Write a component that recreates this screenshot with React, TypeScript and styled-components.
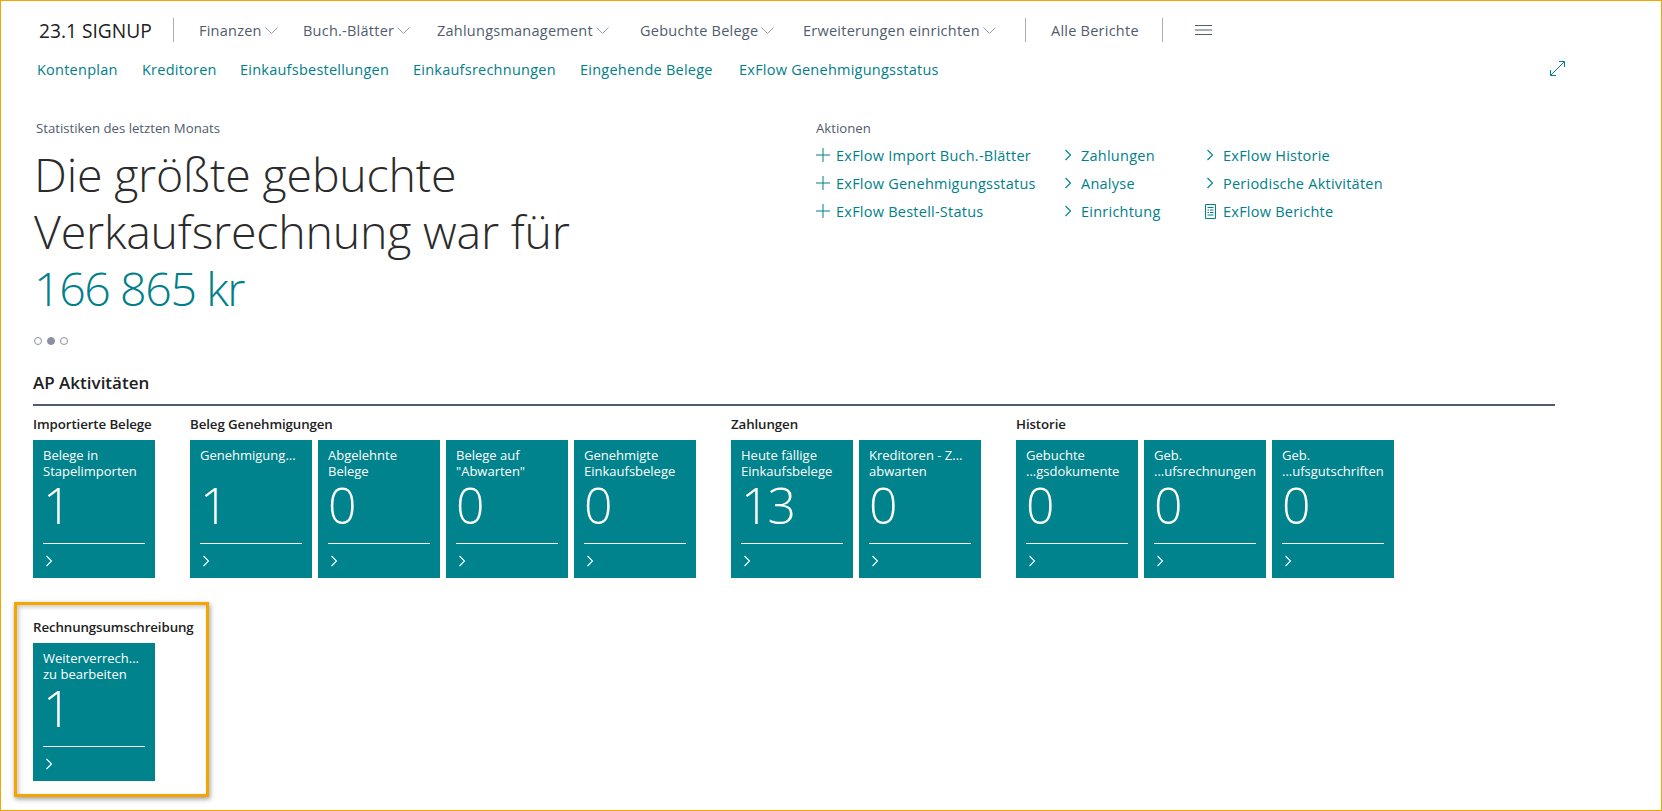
import React from "react";
import styled, { createGlobalStyle } from "styled-components";

const Global = createGlobalStyle`
  html, body { margin: 0; padding: 0; background: #fff; }
  *, *::before, *::after { box-sizing: border-box; }
`;

const FONT = `"Open Sans", "Noto Sans", "Liberation Sans", sans-serif`;
const TEAL = "#00838d";
const LINK = "#00808a";
const SLATE = "#505c6d";

const Frame = styled.div`
  width: 1662px;
  height: 811px;
  overflow: hidden;
  position: relative;
  border: 1px solid #f5a500;
  font-family: ${FONT};
  background: #fff;
`;

const TopNav = styled.nav`
  display: flex;
  align-items: center;
  height: 28px;
  margin-top: 15px;
  padding-left: 38px;
`;

const Brand = styled.div`
  font-size: 19.2px;
  font-weight: 500;
  color: #212121;
  width: 134px;
  white-space: nowrap;
`;

const Sep = styled.span`
  width: 1px;
  height: 24px;
  background: #a9aeb6;
  flex: none;
`;

const MenuItem = styled.div<{ $w: number }>`
  display: flex;
  align-items: center;
  gap: 3px;
  width: ${(p) => p.$w}px;
  flex: none;
  font-size: 14.5px;
  letter-spacing: 0.24px;
  color: ${SLATE};
  white-space: nowrap;
`;

const MenuGroup = styled.div`
  display: flex;
  align-items: center;
  margin-left: 25px;
`;

const Burger = styled.svg`
  margin-left: 32px;
  flex: none;
`;

const LinkRow = styled.div`
  display: flex;
  align-items: center;
  height: 28px;
  margin-top: 11px;
  padding-left: 36px;
  position: relative;
`;

const NavLink = styled.a<{ $w: number }>`
  width: ${(p) => p.$w}px;
  flex: none;
  font-size: 14.5px;
  letter-spacing: 0.24px;
  color: ${LINK};
  white-space: nowrap;
`;

const Expand = styled.svg`
  position: absolute;
  left: 1549px;
  top: 6px;
`;

const Hero = styled.section`
  display: grid;
  grid-template-columns: 782px 1fr;
  padding-left: 33px;
  margin-top: 36px;
  height: 253px;
`;

const Small = styled.div`
  font-size: 13.2px;
  line-height: 18px;
  color: ${SLATE};
`;

const SmallLeft = styled(Small)`
  padding-left: 2px;
`;

const Headline = styled.h1`
  margin: 9px 0 0;
  font-size: 46.5px;
  line-height: 57px;
  font-weight: 300;
  color: #2b2b2b;
  letter-spacing: -0.2px;
  white-space: nowrap;
`;

const Amount = styled.span`
  display: block;
  color: ${LINK};
  letter-spacing: -1.4px;
`;

const Dots = styled.div`
  display: flex;
  gap: 5px;
  margin-top: 20px;
`;

const Dot = styled.span<{ $on?: boolean }>`
  width: 8px;
  height: 8px;
  border-radius: 50%;
  border: 1px solid #8a90a0;
  background: ${(p) => (p.$on ? "#8a90a0" : "#fff")};
`;

const ActionGrid = styled.div`
  display: grid;
  grid-template-columns: 245px 142px 1fr;
  grid-auto-rows: 28px;
  margin-top: 4px;
`;

const Action = styled.a`
  display: flex;
  align-items: center;
  gap: 6px;
  font-size: 14.5px;
  letter-spacing: 0.24px;
  color: ${LINK};
  white-space: nowrap;
`;

const IconBox = styled.span`
  width: 14px;
  height: 16px;
  flex: none;
  display: flex;
  align-items: center;
  justify-content: center;
`;

const Section = styled.section`
  margin-left: 32px;
  width: 1522px;
`;

const SectionTitle = styled.h2`
  margin: 0;
  height: 32px;
  font-size: 17px;
  line-height: 22px;
  font-weight: 600;
  color: #212121;
`;

const Rule = styled.div`
  height: 2px;
  background: ${SLATE};
`;

const Groups = styled.div<{ $top: number }>`
  display: flex;
  gap: 35px;
  margin-top: ${(p) => p.$top}px;
`;

const Group = styled.div<{ $mark?: boolean }>`
  position: relative;
  ${(p) =>
    p.$mark &&
    `
    &::after {
      content: "";
      position: absolute;
      left: -19px;
      top: -16px;
      width: 195px;
      height: 195px;
      border: 3px solid #f5a500;
      box-shadow: 1px 2px 5px rgba(0,0,0,.4), inset 2px 2px 4px rgba(0,0,0,.22);
      pointer-events: none;
    }
  `}
`;

const GroupLabel = styled.div`
  height: 25px;
  font-size: 13.3px;
  line-height: 18px;
  font-weight: 600;
  color: #212121;
  white-space: nowrap;
  letter-spacing: -0.1px;
`;

const Tiles = styled.div`
  display: flex;
  gap: 6px;
`;

const Tile = styled.div`
  width: 122px;
  height: 138px;
  background: ${TEAL};
  color: #fff;
  padding: 7px 10px 0;
  display: flex;
  flex-direction: column;
`;

const TileName = styled.div`
  font-size: 13px;
  line-height: 16px;
  height: 32px;
  white-space: nowrap;
  overflow: hidden;
`;

const TileValue = styled.div`
  font-size: 50px;
  line-height: 52px;
  font-weight: 300;
  height: 63px;
  letter-spacing: -2px;
`;

const TileLine = styled.div`
  height: 1px;
  background: #fff;
  margin-top: 1px;
`;

const TileGo = styled.svg`
  margin: 11px 0 0 2px;
`;

const Chevron = () => (
  <svg width="8" height="12" viewBox="0 0 8 12" fill="none">
    <path d="M1.5 1 L6.5 6 L1.5 11" stroke={LINK} strokeWidth="1.1" />
  </svg>
);

const Plus = () => (
  <svg width="14" height="14" viewBox="0 0 14 14" fill="none">
    <path d="M0 7 H14 M7 0 V14" stroke={LINK} strokeWidth="1" />
  </svg>
);

const Report = () => (
  <svg width="11" height="15" viewBox="0 0 11 15" fill="none">
    <path
      d="M.5.5 H10.5 V14.5 H.5 Z M2.5 3.5 H8.5 M2.5 6 H4 M5 6 H8.5 M2.5 8.5 H4 M5 8.5 H8.5 M2.5 11 H8.5"
      stroke={LINK}
      strokeWidth="1"
    />
  </svg>
);

const Caret = () => (
  <svg width="13" height="7" viewBox="0 0 13 7" fill="none">
    <path d="M.5 .5 L6.5 6.5 L12.5 .5" stroke="#9aa0ab" strokeWidth="1" />
  </svg>
);

const menus: [string, number][] = [
  ["Finanzen", 104],
  ["Buch.-Blätter", 134],
  ["Zahlungsmanagement", 203],
  ["Gebuchte Belege", 163],
  ["Erweiterungen einrichten", 222],
];

const links: [string, number][] = [
  ["Kontenplan", 105],
  ["Kreditoren", 98],
  ["Einkaufsbestellungen", 173],
  ["Einkaufsrechnungen", 167],
  ["Eingehende Belege", 159],
  ["ExFlow Genehmigungsstatus", 210],
];

type Act = { t: string; i: "plus" | "chev" | "rep" };
const actions: Act[] = [
  { t: "ExFlow Import Buch.-Blätter", i: "plus" },
  { t: "Zahlungen", i: "chev" },
  { t: "ExFlow Historie", i: "chev" },
  { t: "ExFlow Genehmigungsstatus", i: "plus" },
  { t: "Analyse", i: "chev" },
  { t: "Periodische Aktivitäten", i: "chev" },
  { t: "ExFlow Bestell-Status", i: "plus" },
  { t: "Einrichtung", i: "chev" },
  { t: "ExFlow Berichte", i: "rep" },
];

type T = [string, string, string];
const row1: { title: string; tiles: T[] }[] = [
  { title: "Importierte Belege", tiles: [["Belege in", "Stapelimporten", "1"]] },
  {
    title: "Beleg Genehmigungen",
    tiles: [
      ["Genehmigung...", "", "1"],
      ["Abgelehnte", "Belege", "0"],
      ["Belege auf", '"Abwarten"', "0"],
      ["Genehmigte", "Einkaufsbelege", "0"],
    ],
  },
  {
    title: "Zahlungen",
    tiles: [
      ["Heute fällige", "Einkaufsbelege", "13"],
      ["Kreditoren - Z...", "abwarten", "0"],
    ],
  },
  {
    title: "Historie",
    tiles: [
      ["Gebuchte", "...gsdokumente", "0"],
      ["Geb.", "...ufsrechnungen", "0"],
      ["Geb.", "...ufsgutschriften", "0"],
    ],
  },
];

const TileCard = ({ t }: { t: T }) => (
  <Tile>
    <TileName>
      {t[0]}
      <br />
      {t[1]}
    </TileName>
    <TileValue>{t[2]}</TileValue>
    <TileLine />
    <TileGo width="8" height="12" viewBox="0 0 8 12" fill="none">
      <path d="M1.5 1 L6.5 6 L1.5 11" stroke="#fff" strokeWidth="1.1" />
    </TileGo>
  </Tile>
);

export default function App() {
  return (
    <Frame>
      <Global />
      <TopNav>
        <Brand>23.1 SIGNUP</Brand>
        <Sep />
        <MenuGroup>
          {menus.map(([m, w]) => (
            <MenuItem key={m} $w={w}>
              {m}
              <Caret />
            </MenuItem>
          ))}
        </MenuGroup>
        <Sep />
        <MenuGroup>
          <MenuItem $w={111}>Alle Berichte</MenuItem>
        </MenuGroup>
        <Sep />
        <Burger width="17" height="10" viewBox="0 0 17 10" fill="none">
          <path d="M0 .5 H17 M0 5 H17 M0 9.5 H17" stroke={SLATE} strokeWidth="1" />
        </Burger>
      </TopNav>
      <LinkRow>
        {links.map(([l, w]) => (
          <NavLink key={l} $w={w}>
            {l}
          </NavLink>
        ))}
        <Expand width="15" height="15" viewBox="0 0 15 15" fill="none">
          <path d="M1 14 L14 1 M9 .5 H14.5 V6 M.5 9 V14.5 H6" stroke={LINK} strokeWidth="1" />
        </Expand>
      </LinkRow>
      <Hero>
        <div>
          <SmallLeft>Statistiken des letzten Monats</SmallLeft>
          <Headline>
            Die größte gebuchte
            <br />
            Verkaufsrechnung war für
            <Amount>166 865 kr</Amount>
          </Headline>
          <Dots>
            <Dot />
            <Dot $on />
            <Dot />
          </Dots>
        </div>
        <div>
          <Small>Aktionen</Small>
          <ActionGrid>
            {actions.map((a) => (
              <Action key={a.t}>
                <IconBox>
                  {a.i === "plus" ? <Plus /> : a.i === "chev" ? <Chevron /> : <Report />}
                </IconBox>
                {a.t}
              </Action>
            ))}
          </ActionGrid>
        </div>
      </Hero>
      <Section>
        <SectionTitle>AP Aktivitäten</SectionTitle>
        <Rule />
        <Groups $top={9}>
          {row1.map((g) => (
            <Group key={g.title}>
              <GroupLabel>{g.title}</GroupLabel>
              <Tiles>
                {g.tiles.map((t) => (
                  <TileCard key={t[0] + t[1]} t={t} />
                ))}
              </Tiles>
            </Group>
          ))}
        </Groups>
        <Groups $top={40}>
          <Group $mark>
            <GroupLabel>Rechnungsumschreibung</GroupLabel>
            <Tiles>
              <TileCard t={["Weiterverrech...", "zu bearbeiten", "1"]} />
            </Tiles>
          </Group>
        </Groups>
      </Section>
    </Frame>
  );
}
